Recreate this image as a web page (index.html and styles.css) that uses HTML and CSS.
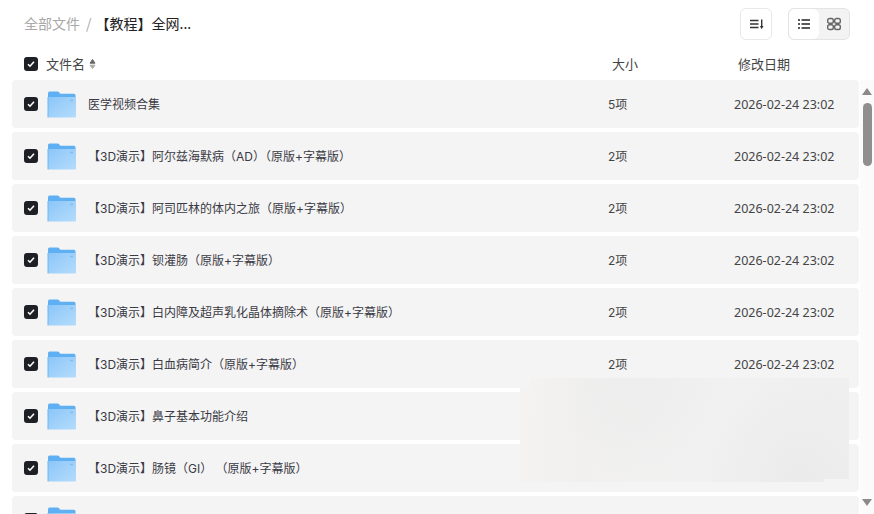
FILE: index.html
```html
<!DOCTYPE html>
<html lang="en">
<head>
    <meta charset="UTF-8">
    <title>全部文件</title>
    <link rel="stylesheet" href="styles.css">
</head>
<body>
    <div class="page">
        <div class="toolbar">
            <div class="crumbs">
                <span class="crumb-root">全部文件</span>
                <span class="crumb-sep">/</span>
                <span class="crumb-current">【教程】全网...</span>
            </div>
            <div class="tools">
                <button class="tool-btn" type="button">
                    <svg width="16" height="16" viewBox="0 0 16 16"><path d="M2 4.500h8.500M2 8h8.500M2 11.500h8.500" stroke="#333" stroke-width="1.300" fill="none"/><path d="M13.700 3.500v7" stroke="#333" stroke-width="1.400" fill="none"/><path d="M11.900 10h3.600l-1.800 3.200z" fill="#333"/></svg>
                </button>
                <div class="view-switch">
                    <span class="view-item active">
                        <svg width="14" height="14" viewBox="0 0 14 14"><path d="M4.500 3h8.500M4.500 7h8.500M4.500 11h8.500" stroke="#222" stroke-width="1.300" fill="none"/><path d="M1 3h2M1 7h2M1 11h2" stroke="#222" stroke-width="1.300" fill="none"/></svg>
                    </span>
                    <span class="view-item">
                        <svg width="14" height="14" viewBox="0 0 14 14" fill="none" stroke="#666" stroke-width="1.400"><rect x=".7" y="1.500" width="5.600" height="4.800" rx="1.800"/><rect x="7.700" y="1.500" width="5.600" height="4.800" rx="1.800"/><rect x=".7" y="7.700" width="5.600" height="4.800" rx="1.800"/><rect x="7.700" y="7.700" width="5.600" height="4.800" rx="1.800"/></svg>
                    </span>
                </div>
            </div>
        </div>

        <div class="list-head">
            <div class="col-name head-name">
                <span class="check"><svg width="8" height="8" viewBox="0 0 8 8"><path d="M1 4.200l2 2 4-4.400" stroke="#fff" stroke-width="1.600" fill="none"/></svg></span>
                <span class="head-label">文件名</span>
                <svg class="sort-icon" width="7" height="12" viewBox="0 0 7 12"><path d="M3.500 1.500L6 5.200H1z" fill="#666" stroke="#666" stroke-linejoin="round"/><path d="M3.500 10.500L1 7.200h5z" fill="#aaa" stroke="#aaa" stroke-linejoin="round"/></svg>
            </div>
            <div class="col-size">大小</div>
            <div class="col-date">修改日期</div>
        </div>

        <div class="list-wrap">
            <div class="list">
                <div class="row">
                    <span class="check"><svg width="8" height="8" viewBox="0 0 8 8"><path d="M1 4.200l2 2 4-4.400" stroke="#fff" stroke-width="1.600" fill="none"/></svg></span>
                    <svg class="folder" width="30" height="28" viewBox="0 0 30 28"><use href="#folder"/></svg>
                    <span class="row-name">医学视频合集</span>
                    <span class="row-size">5项</span>
                    <span class="row-date">2026-02-24 23:02</span>
                </div>
                <div class="row">
                    <span class="check"><svg width="8" height="8" viewBox="0 0 8 8"><path d="M1 4.200l2 2 4-4.400" stroke="#fff" stroke-width="1.600" fill="none"/></svg></span>
                    <svg class="folder" width="30" height="28" viewBox="0 0 30 28"><use href="#folder"/></svg>
                    <span class="row-name">【3D演示】阿尔兹海默病（AD）（原版+字幕版）</span>
                    <span class="row-size">2项</span>
                    <span class="row-date">2026-02-24 23:02</span>
                </div>
                <div class="row">
                    <span class="check"><svg width="8" height="8" viewBox="0 0 8 8"><path d="M1 4.200l2 2 4-4.400" stroke="#fff" stroke-width="1.600" fill="none"/></svg></span>
                    <svg class="folder" width="30" height="28" viewBox="0 0 30 28"><use href="#folder"/></svg>
                    <span class="row-name">【3D演示】阿司匹林的体内之旅（原版+字幕版）</span>
                    <span class="row-size">2项</span>
                    <span class="row-date">2026-02-24 23:02</span>
                </div>
                <div class="row">
                    <span class="check"><svg width="8" height="8" viewBox="0 0 8 8"><path d="M1 4.200l2 2 4-4.400" stroke="#fff" stroke-width="1.600" fill="none"/></svg></span>
                    <svg class="folder" width="30" height="28" viewBox="0 0 30 28"><use href="#folder"/></svg>
                    <span class="row-name">【3D演示】钡灌肠（原版+字幕版）</span>
                    <span class="row-size">2项</span>
                    <span class="row-date">2026-02-24 23:02</span>
                </div>
                <div class="row">
                    <span class="check"><svg width="8" height="8" viewBox="0 0 8 8"><path d="M1 4.200l2 2 4-4.400" stroke="#fff" stroke-width="1.600" fill="none"/></svg></span>
                    <svg class="folder" width="30" height="28" viewBox="0 0 30 28"><use href="#folder"/></svg>
                    <span class="row-name">【3D演示】白内障及超声乳化晶体摘除术（原版+字幕版）</span>
                    <span class="row-size">2项</span>
                    <span class="row-date">2026-02-24 23:02</span>
                </div>
                <div class="row">
                    <span class="check"><svg width="8" height="8" viewBox="0 0 8 8"><path d="M1 4.200l2 2 4-4.400" stroke="#fff" stroke-width="1.600" fill="none"/></svg></span>
                    <svg class="folder" width="30" height="28" viewBox="0 0 30 28"><use href="#folder"/></svg>
                    <span class="row-name">【3D演示】白血病简介（原版+字幕版）</span>
                    <span class="row-size">2项</span>
                    <span class="row-date">2026-02-24 23:02</span>
                </div>
                <div class="row">
                    <span class="check"><svg width="8" height="8" viewBox="0 0 8 8"><path d="M1 4.200l2 2 4-4.400" stroke="#fff" stroke-width="1.600" fill="none"/></svg></span>
                    <svg class="folder" width="30" height="28" viewBox="0 0 30 28"><use href="#folder"/></svg>
                    <span class="row-name">【3D演示】鼻子基本功能介绍</span>
                </div>
                <div class="row">
                    <span class="check"><svg width="8" height="8" viewBox="0 0 8 8"><path d="M1 4.200l2 2 4-4.400" stroke="#fff" stroke-width="1.600" fill="none"/></svg></span>
                    <svg class="folder" width="30" height="28" viewBox="0 0 30 28"><use href="#folder"/></svg>
                    <span class="row-name">【3D演示】肠镜（GI） （原版+字幕版）</span>
                </div>
                <div class="row">
                    <span class="check"><svg width="8" height="8" viewBox="0 0 8 8"><path d="M1 4.200l2 2 4-4.400" stroke="#fff" stroke-width="1.600" fill="none"/></svg></span>
                    <svg class="folder" width="30" height="28" viewBox="0 0 30 28"><use href="#folder"/></svg>
                </div>
            </div>
            <div class="scrollbar">
                <span class="arrow-up"></span>
                <span class="thumb"></span>
                <span class="arrow-down"></span>
            </div>
            <div class="smudge"></div>
        </div>
    </div>

    <svg width="0" height="0" class="defs">
        <defs>
            <linearGradient id="folderBody" x1="0" y1="0" x2="1" y2="1">
                <stop offset="0" stop-color="#8cc6f8"/>
                <stop offset="1" stop-color="#b4dcfc"/>
            </linearGradient>
            <symbol id="folder" viewBox="0 0 30 28">
                <path d="M1 3.500C1 2.400 1.600 1.500 2.700 1.500h7.800c.8 0 1.300.4 1.800 1l1 1.200h13.500c1 0 1.700.8 1.700 1.800V8H1z" fill="#5fb0f2"/>
                <path d="M1 7h28v19.500c0 .6-.4 1-1 1H2c-.6 0-1-.4-1-1z" fill="url(#folderBody)"/>
                <path d="M1 7v20.500" stroke="#6db8f5" stroke-width="1"/>
                <path d="M23 10.500h3" stroke="#7fbdf2" stroke-width="1.500"/>
            </symbol>
        </defs>
    </svg>
</body>
</html>
```

FILE: styles.css
```css
html, body {
    margin: 0;
    height: 100%;
    overflow: hidden;
}
body {
    font-family: "Inter", "Noto Sans CJK SC", sans-serif;
    font-size: 12px;
    color: #333;
    background: #fff;
}
.page {
    display: flex;
    flex-direction: column;
    height: 514px;
}
.defs {
    position: absolute;
}
.toolbar {
    display: flex;
    justify-content: space-between;
    align-items: center;
    height: 48px;
    padding: 0 24px;
    flex: none;
}
.crumbs {
    display: flex;
    align-items: center;
    font-size: 14px;
    font-family: "Noto Sans CJK SC", sans-serif;
    margin-top: -2px;
}
.crumb-root {
    color: #a8a8a8;
}
.crumb-sep {
    color: #a8a8a8;
    margin: 0 4px 0 6px;
}
.crumb-current {
    color: #222;
}
.tools {
    display: flex;
    align-items: center;
    gap: 16px;
}
.tool-btn {
    display: flex;
    align-items: center;
    justify-content: center;
    width: 32px;
    height: 32px;
    padding: 0;
    background: #fff;
    border: 1px solid #e8e8e8;
    border-radius: 6px;
}
.view-switch {
    display: flex;
    width: 62px;
    height: 32px;
    box-sizing: border-box;
    background: #f3f3f3;
    border: 1px solid #e4e4e4;
    border-radius: 6px;
    overflow: hidden;
}
.view-item {
    display: flex;
    align-items: center;
    justify-content: center;
    flex: 1;
}
.view-item.active {
    background: #fff;
    border-radius: 6px;
}
.list-head {
    display: flex;
    align-items: center;
    height: 32px;
    padding-left: 24px;
    flex: none;
    font-family: "Noto Sans CJK SC", sans-serif;
    font-size: 13px;
    color: #444;
}
.col-name {
    width: 588px;
}
.col-size, .col-date, .head-label {
    padding-bottom: 2px;
}
.head-name {
    display: flex;
    align-items: center;
    gap: 8px;
}
.sort-icon {
    margin-left: -4px;
}
.col-size {
    width: 126px;
}
.check {
    display: flex;
    align-items: center;
    justify-content: center;
    width: 14px;
    height: 14px;
    flex: none;
    background: #1f2026;
    border-radius: 3px;
}
.list-wrap {
    position: relative;
    display: flex;
    flex: 1;
    min-height: 0;
    overflow: hidden;
}
.list {
    display: flex;
    flex-direction: column;
    gap: 4px;
    width: 847px;
    margin-left: 12px;
    flex: none;
}
.row {
    display: flex;
    align-items: center;
    height: 48px;
    flex: none;
    padding-left: 12px;
    background: #f4f4f4;
    border-radius: 4px;
}
.folder {
    margin-left: 9px;
    flex: none;
}
.row-name {
    width: 520px;
    margin-left: 11px;
    padding-bottom: 2px;
    flex: none;
    color: #3a3a44;
}
.row-size {
    width: 126px;
    padding-bottom: 2px;
    flex: none;
    color: #444;
}
.row-date {
    font-family: "Noto Sans", "Noto Sans CJK SC", sans-serif;
    font-size: 12.500px;
    color: #444;
}
.scrollbar {
    display: flex;
    flex-direction: column;
    align-items: center;
    width: 14px;
    margin-left: 1px;
    flex: none;
    background: #fbfbfb;
}
.arrow-up {
    width: 0;
    height: 0;
    margin-top: 8px;
    border-left: 5px solid transparent;
    border-right: 5px solid transparent;
    border-bottom: 7px solid #8a8a8a;
}
.thumb {
    width: 9px;
    height: 63px;
    margin-top: 8px;
    background: #8f8f8f;
    border-radius: 5px;
}
.arrow-down {
    width: 0;
    height: 0;
    margin-top: 333px;
    border-left: 5px solid transparent;
    border-right: 5px solid transparent;
    border-top: 7px solid #8a8a8a;
}
/* washed out patch over the lower rows */
.smudge {
    position: absolute;
    left: 520px;
    top: 298px;
    width: 329px;
    height: 104px;
    background:
        radial-gradient(circle at 85% 95%, #ebebeb 0, rgba(235, 235, 235, 0) 35%),
        radial-gradient(circle at 35% 5%, #ededed 0, rgba(237, 237, 237, 0) 40%),
        linear-gradient(95deg, #f5f3f2 0%, #f1f0ef 20%, #f1f1f1 60%, #efefef 100%);
    clip-path: polygon(0 9px, 10px 9px, 10px 0, 100% 0, 100% 101px, 304px 101px, 304px 100%, 0 100%);
}
```
